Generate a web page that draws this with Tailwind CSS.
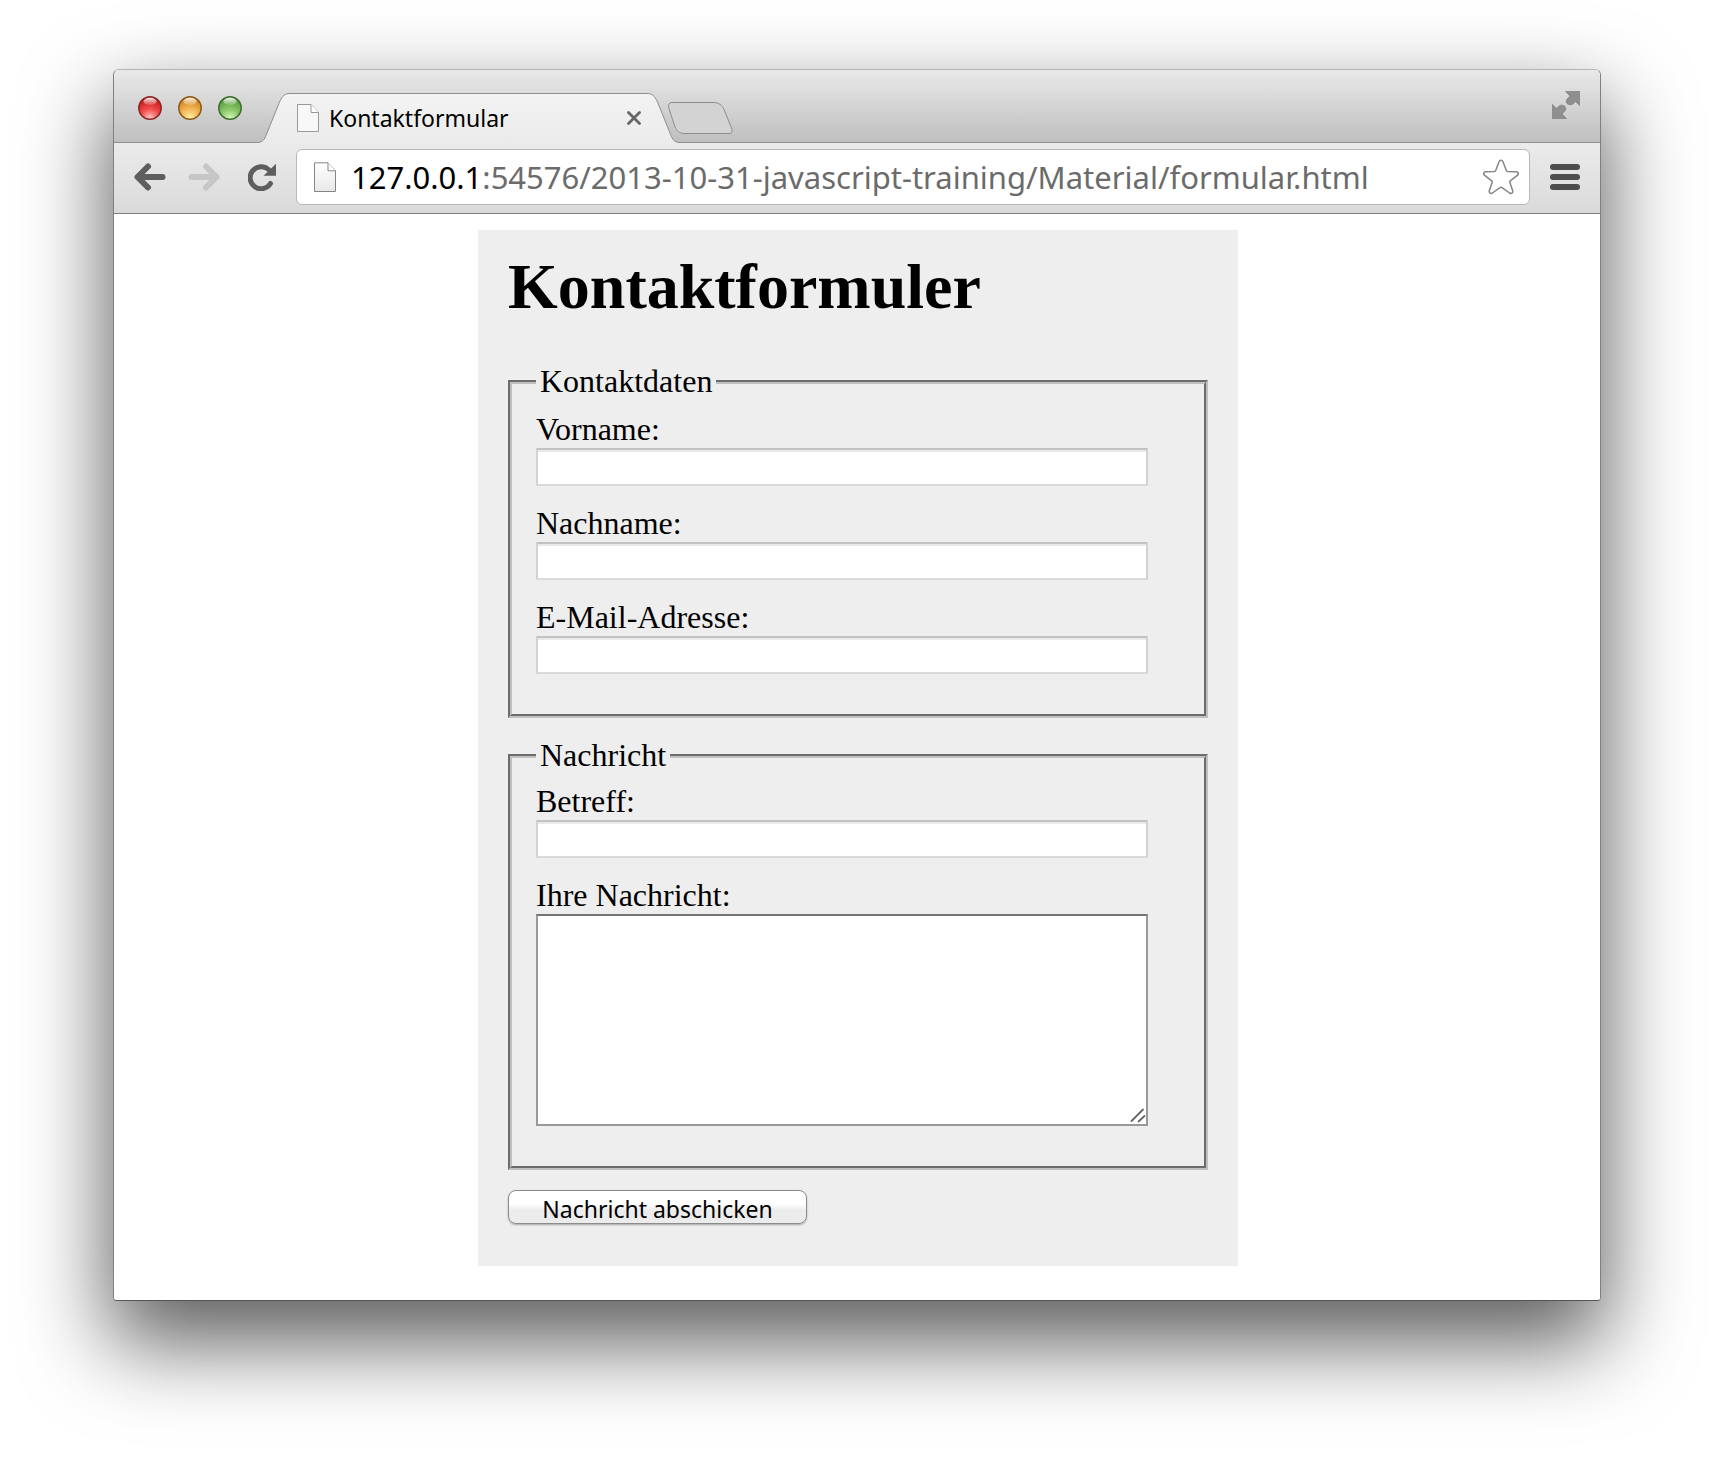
<!DOCTYPE html>
<html lang="de">
<head>
<meta charset="utf-8">
<title>Kontaktformular</title>
<script src="https://cdn.jsdelivr.net/npm/@tailwindcss/browser@4"></script>
</head>
<body class="min-h-screen bg-white px-[113px] pt-[69px] pb-[157px] text-black">
<div class="overflow-clip rounded-t-md rounded-b-sm border border-x-[#808080] border-t-[#b4b4b4] border-b-[#555] bg-white shadow-[0_38px_86px_4px_rgba(0,0,0,0.64)]">

  <!-- Tab strip -->
  <div class="flex h-[73px] items-end border-b border-[#8e8e8e] bg-linear-to-b from-[#e9e9e9] to-[#bfbfbf] pr-5 pl-6">
    <div class="flex gap-4 self-center pt-1">
      <button aria-label="Schließen" class="size-6"><svg viewBox="0 0 24 24"><defs><radialGradient id="r" cx=".5" cy=".95" r=".8"><stop offset="0" stop-color="#ffc9c9"/><stop offset=".5" stop-color="#f4504e"/><stop offset="1" stop-color="#c8201f"/></radialGradient><linearGradient id="g" x2="0" y2="1"><stop offset="0" stop-color="#fff" stop-opacity=".9"/><stop offset="1" stop-color="#fff" stop-opacity=".1"/></linearGradient></defs><circle cx="12" cy="12" r="11.2" fill="url(#r)" stroke="#8a2a28" stroke-width="1.5"/><ellipse cx="12" cy="5.5" rx="6.5" ry="3.7" fill="url(#g)"/></svg></button>
      <button aria-label="Minimieren" class="size-6"><svg viewBox="0 0 24 24"><defs><radialGradient id="y" cx=".5" cy=".95" r=".8"><stop offset="0" stop-color="#fff2a8"/><stop offset=".5" stop-color="#f3b95a"/><stop offset="1" stop-color="#d58a26"/></radialGradient></defs><circle cx="12" cy="12" r="11.2" fill="url(#y)" stroke="#8d5a1c" stroke-width="1.5"/><ellipse cx="12" cy="5.5" rx="6.5" ry="3.7" fill="url(#g)"/></svg></button>
      <button aria-label="Vergrößern" class="size-6"><svg viewBox="0 0 24 24"><defs><radialGradient id="n" cx=".5" cy=".95" r=".8"><stop offset="0" stop-color="#d8f6b8"/><stop offset=".5" stop-color="#8cc96a"/><stop offset="1" stop-color="#5da043"/></radialGradient></defs><circle cx="12" cy="12" r="11.2" fill="url(#n)" stroke="#3f6f30" stroke-width="1.5"/><ellipse cx="12" cy="5.5" rx="6.5" ry="3.7" fill="url(#g)"/></svg></button>
    </div>

    <div class="-mb-px ml-4 flex h-[50px] w-[421px]">
      <svg class="w-8 shrink-0" viewBox="0 0 32 50"><defs><linearGradient id="t" x2="0" y2="1"><stop offset="0" stop-color="#f3f3f3"/><stop offset="1" stop-color="#ebebeb"/></linearGradient></defs><path d="M0 49.5C5 49 6.500 46 8 42.500L21.500 9C24.500 2.500 27 .5 32 .5V50H0Z" fill="url(#t)"/><path d="M0 49.500C5 49 6.500 46 8 42.500L21.500 9C24.500 2.500 27 .5 32 .5" fill="none" stroke="#8e8e8e"/></svg>
      <div class="flex grow items-center gap-2.5 border-t border-[#8e8e8e] bg-linear-to-b from-[#f3f3f3] to-[#ebebeb] pr-1.5 pb-0.5 pl-[7px]">
        <svg class="h-7 w-[22px]" viewBox="0 0 22 28"><path d="M.5.5H14L21.500 8.500V27.500H.5Z" fill="#f8f8f8" stroke="#999"/><path d="M14 .5V8.500H21.500" fill="#fff" stroke="#999"/></svg>
        <span class="grow font-['Noto_Sans',sans-serif] text-[23px] leading-8">Kontaktformular</span>
        <button aria-label="Tab schließen"><svg class="size-3.5" viewBox="0 0 14 14"><path d="M1.500 1.500L12.500 12.500M12.500 1.500L1.500 12.500" stroke="#666" stroke-width="2.800" stroke-linecap="round"/></svg></button>
      </div>
      <svg class="w-8 shrink-0" viewBox="0 0 32 50"><path d="M32 49.500C27 49 25.500 46 24 42.500L10.500 9C7.500 2.500 5 .5 0 .5V50H32Z" fill="url(#t)"/><path d="M32 49.500C27 49 25.500 46 24 42.500L10.500 9C7.500 2.500 5 .5 0 .5" fill="none" stroke="#8e8e8e"/></svg>
    </div>
    <button aria-label="Neuer Tab" class="mb-[7px] -ml-3"><svg class="h-[34px] w-[66px]" viewBox="0 0 66 34"><path d="M5 1.500H46C52 1.500 55 4 57 8.500L64.500 27C65.500 30.500 65 32.500 62 32.500H17C12.500 32.500 10 30 8 26L1.800 7C1 3.500 2 1.500 5 1.500Z" fill="#d3d3d3" stroke="#8e8e8e"/></svg></button>
    <button aria-label="Vollbild" class="ml-auto self-center pb-0.5"><svg class="size-7" viewBox="0 0 28 28" fill="#8f8f8f" stroke="#757575" stroke-width=".6"><path d="M13.500.5H27.700V14.500L23.500 10.500C21.500 13 19.500 14.500 16.500 13.500C14 12.500 13.500 9.500 15.500 7.500L18 5Z"/><path d="M.3 13.500L4.500 17.500C6.500 15 8.500 13.500 11.500 14.500C14 15.500 14.500 18.500 12.500 20.500L10 23L14.500 27.500H.3Z"/></svg></button>
  </div>

  <!-- Toolbar -->
  <div class="flex h-[71px] items-center border-b border-[#7c7c7c] bg-linear-to-b from-[#ebebeb] to-[#dadada] px-5 pb-0.5">
    <button aria-label="Zurück"><svg class="h-7 w-8" viewBox="0 0 32 28" fill="none" stroke="#5e5e5e" stroke-width="6" stroke-linecap="round" stroke-linejoin="round"><path d="M28.500 14H4M14 3.500L3.500 14L14 24.500"/></svg></button>
    <button aria-label="Vor" class="ml-[22px]"><svg class="h-7 w-8" viewBox="0 0 32 28" fill="none" stroke="#c6c6c6" stroke-width="6" stroke-linecap="round" stroke-linejoin="round"><path d="M3.500 14H28M18 3.500L28.500 14L18 24.500"/></svg></button>
    <button aria-label="Neu laden" class="ml-7"><svg class="size-7" viewBox="0 0 28 28"><path d="M22.500 20.500A11 11 0 1 1 20.500 6.500" fill="none" stroke="#5e5e5e" stroke-width="5" stroke-linecap="round"/><path d="M28 .8V12.800H15.500Z" fill="#5e5e5e"/></svg></button>
    <div class="ml-5 flex h-14 grow items-center rounded-md border border-[#b8b8b8] bg-white pr-2.5 pl-4">
      <svg class="h-[31px] w-6 shrink-0" viewBox="0 0 24 31"><defs><linearGradient id="p" x2="0" y2="1"><stop offset="0" stop-color="#fff"/><stop offset="1" stop-color="#e8e8e8"/></linearGradient></defs><path d="M1.500.8H15L22.500 8.800V29.500H1.500Z" fill="url(#p)" stroke="#858585"/><path d="M15 .8V8.800H22.500" fill="#fff" stroke="#858585"/></svg>
      <div class="ml-3.5 grow font-['Noto_Sans',sans-serif] text-[31px] leading-10 whitespace-nowrap text-[#6b6b6b]"><span class="text-black">127.0.0.1</span>:54576/2013-10-31-javascript-training/Material/formular.html</div>
      <button aria-label="Lesezeichen"><svg class="size-9" viewBox="0 0 36 36" fill="#fff" stroke="#858585" stroke-width="1.500" stroke-linejoin="round"><path d="M16 2.700C16.800.6 19.200.6 20 2.700L23.300 11.500C23.500 12 24 12.300 24.500 12.400L33.200 12.700C35.400 12.900 36 15 34.300 16.300L27.300 21.800C26.900 22.200 26.700 22.700 26.800 23.200L29.700 31.800C30.200 33.900 28.400 35.100 26.600 34L19 28.600C18.400 28.200 17.600 28.200 17 28.600L9.400 34C7.600 35.100 5.800 33.900 6.300 31.800L9.200 23.200C9.300 22.700 9.100 22.200 8.700 21.800L1.700 16.300C0 15 .6 12.900 2.800 12.700L11.500 12.400C12 12.300 12.500 12 12.700 11.500Z"/></svg></button>
    </div>
    <button aria-label="Menü" class="ml-5"><svg class="h-[26px] w-[30px]" viewBox="0 0 30 26" fill="#4d4d4d"><rect width="30" height="6" rx="3"/><rect y="10" width="30" height="6" rx="3"/><rect y="20" width="30" height="6" rx="3"/></svg></button>
  </div>

  <!-- Page -->
  <main class="bg-white pt-4 pb-[34px] pl-0.5">
    <form class="mx-auto w-full max-w-[760px] bg-[#eee] px-[30px] pt-[21px] pb-[42px] font-['Liberation_Serif',serif] text-[32px] leading-[34px]">
      <h1 class="mb-[41px] text-[64px] leading-[72px] font-bold">Kontaktformuler</h1>

      <fieldset class="mb-5 border-4 border-[#c0c0c0] px-6 pt-3 pb-5 [border-style:groove]">
        <legend class="px-1 pb-0.5">Kontaktdaten</legend>
        <div class="mb-5 w-[612px] max-w-full">
          <label for="vorname" class="block pb-0.5">Vorname:</label>
          <input id="vorname" type="text" class="block h-[38px] w-full border-2 border-[#d2d2d2] border-t-[#c2c2c2] border-b-[#dadada] bg-white px-1 text-[22px] shadow-[inset_0_2px_0_#eaeaea]">
        </div>
        <div class="mb-5 w-[612px] max-w-full">
          <label for="nachname" class="block pb-0.5">Nachname:</label>
          <input id="nachname" type="text" class="block h-[38px] w-full border-2 border-[#d2d2d2] border-t-[#c2c2c2] border-b-[#dadada] bg-white px-1 text-[22px] shadow-[inset_0_2px_0_#eaeaea]">
        </div>
        <div class="mb-5 w-[612px] max-w-full">
          <label for="email" class="block pb-0.5">E-Mail-Adresse:</label>
          <input id="email" type="email" class="block h-[38px] w-full border-2 border-[#d2d2d2] border-t-[#c2c2c2] border-b-[#dadada] bg-white px-1 text-[22px] shadow-[inset_0_2px_0_#eaeaea]">
        </div>
      </fieldset>

      <fieldset class="mb-5 border-4 border-[#c0c0c0] px-6 pt-2.5 pb-5 [border-style:groove]">
        <legend class="px-1 pb-0.5">Nachricht</legend>
        <div class="mb-5 w-[612px] max-w-full">
          <label for="betreff" class="block pb-0.5">Betreff:</label>
          <input id="betreff" type="text" class="block h-[38px] w-full border-2 border-[#d2d2d2] border-t-[#c2c2c2] border-b-[#dadada] bg-white px-1 text-[22px] shadow-[inset_0_2px_0_#eaeaea]">
        </div>
        <div class="relative mb-5 w-[612px] max-w-full">
          <label for="nachricht" class="block pb-0.5">Ihre Nachricht:</label>
          <textarea id="nachricht" class="block h-[212px] w-full resize-none border-2 border-[#999] border-t-[#737373] bg-white p-1 text-[22px]"></textarea>
          <svg class="pointer-events-none absolute right-0.5 bottom-[3px] size-4" viewBox="0 0 16 16" stroke="#666" stroke-width="1.800" stroke-linecap="round"><path d="M1.500 14L13 2.500M8.500 14.500L14.500 9"/></svg>
        </div>
      </fieldset>

      <button type="submit" class="block h-[34px] w-[299px] rounded-lg border border-[#8c8c8c] bg-linear-to-b from-white from-40% to-[#ececec] to-60% pt-1 text-center font-['Noto_Sans',sans-serif] text-[23px] leading-7 shadow-[0_1px_2px_rgba(0,0,0,0.3)]">Nachricht abschicken</button>
    </form>
  </main>
</div>
</body>
</html>
